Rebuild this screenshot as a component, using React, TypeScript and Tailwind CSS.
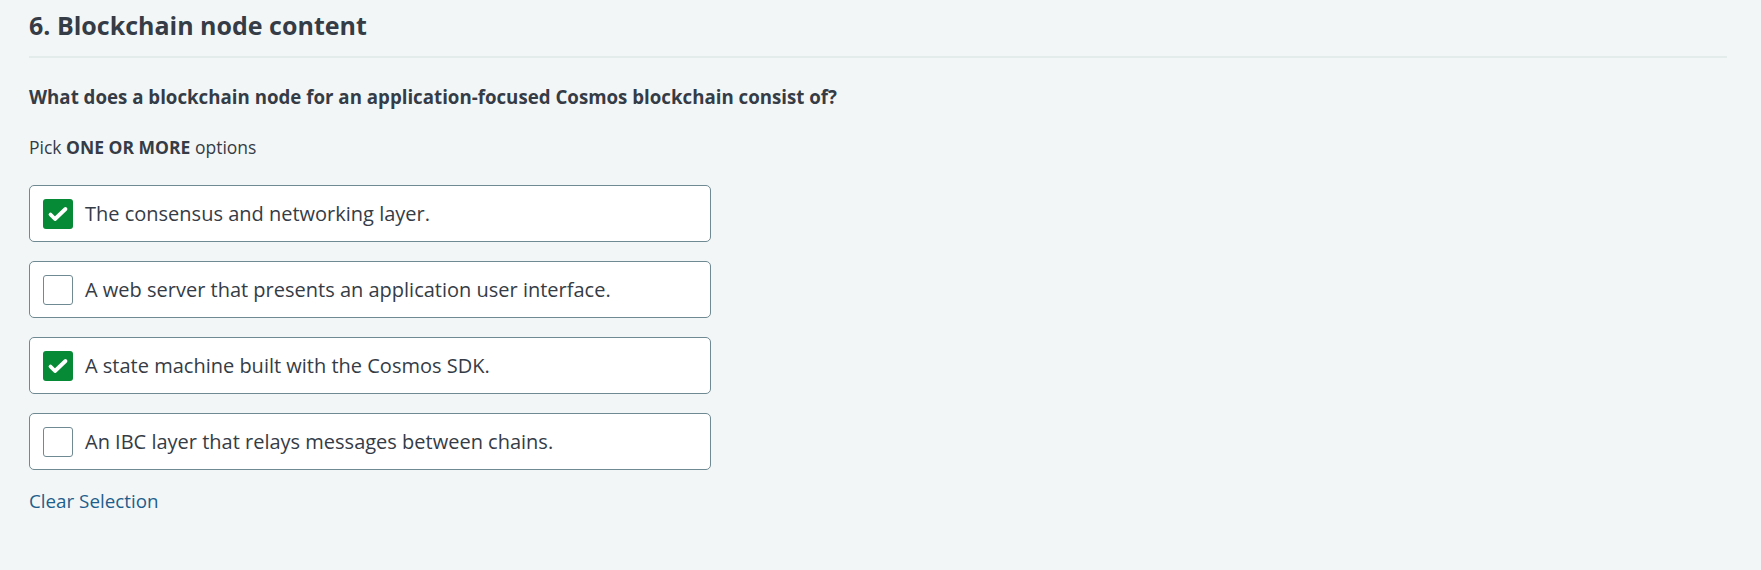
import React, { useState } from 'react';

const OPTIONS = [
  'The consensus and networking layer.',
  'A web server that presents an application user interface.',
  'A state machine built with the Cosmos SDK.',
  'An IBC layer that relays messages between chains.',
];

const App: React.FC = () => {
  const [selected, setSelected] = useState<boolean[]>([true, false, true, false]);

  const toggle = (i: number) => {
    setSelected((prev) => prev.map((v, idx) => (idx === i ? !v : v)));
  };

  return (
    <div
      className="min-h-screen bg-[#f3f6f7] pl-[29px] pr-[34px] text-[#353c46]"
      style={{ fontFamily: '"Open Sans", "Liberation Sans", sans-serif' }}
    >
      {/* Section header */}
      <h2 className="pt-[7px] text-[25px] leading-[36px] font-bold">6. Blockchain node content</h2>
      <div className="mt-[13px] h-[2px] bg-[#e4ebeb]" />

      {/* Question */}
      <p className="mt-[25px] text-[18.7px] leading-[27px] font-bold">
        What does a blockchain node for an application-focused Cosmos blockchain consist of?
      </p>
      <p className="mt-[24px] text-[17.5px] leading-[26px]">
        Pick <span className="font-bold">ONE OR MORE</span> options
      </p>

      {/* Options */}
      <div className="mt-[25px] flex w-[682px] flex-col gap-[19px]">
        {OPTIONS.map((label, i) => (
          <button
            key={label}
            onClick={() => toggle(i)}
            className="flex h-[57px] items-center gap-[12px] rounded-[5px] border border-[#6f8a92] bg-white pl-[13px] text-left"
          >
            {selected[i] ? (
              <span className="h-[30px] w-[30px] shrink-0 rounded-[3px] bg-[#078a35]">
                <svg width="30" height="30" viewBox="0 0 30 30" fill="none">
                  <path d="M7.5 15.5l4.5 4.5 10.5-10" stroke="white" strokeWidth="3.8" strokeLinecap="round" strokeLinejoin="round" />
                </svg>
              </span>
            ) : (
              <span className="h-[30px] w-[30px] shrink-0 rounded-[3px] border border-[#6f8a92] bg-white" />
            )}
            <span className="text-[20px] leading-[26px]">{label}</span>
          </button>
        ))}
      </div>

      <button
        onClick={() => setSelected([false, false, false, false])}
        className="mt-[18px] block text-[18.8px] leading-[26px] text-[#1d5e8c]"
      >
        Clear Selection
      </button>
    </div>
  );
};

export default App;
